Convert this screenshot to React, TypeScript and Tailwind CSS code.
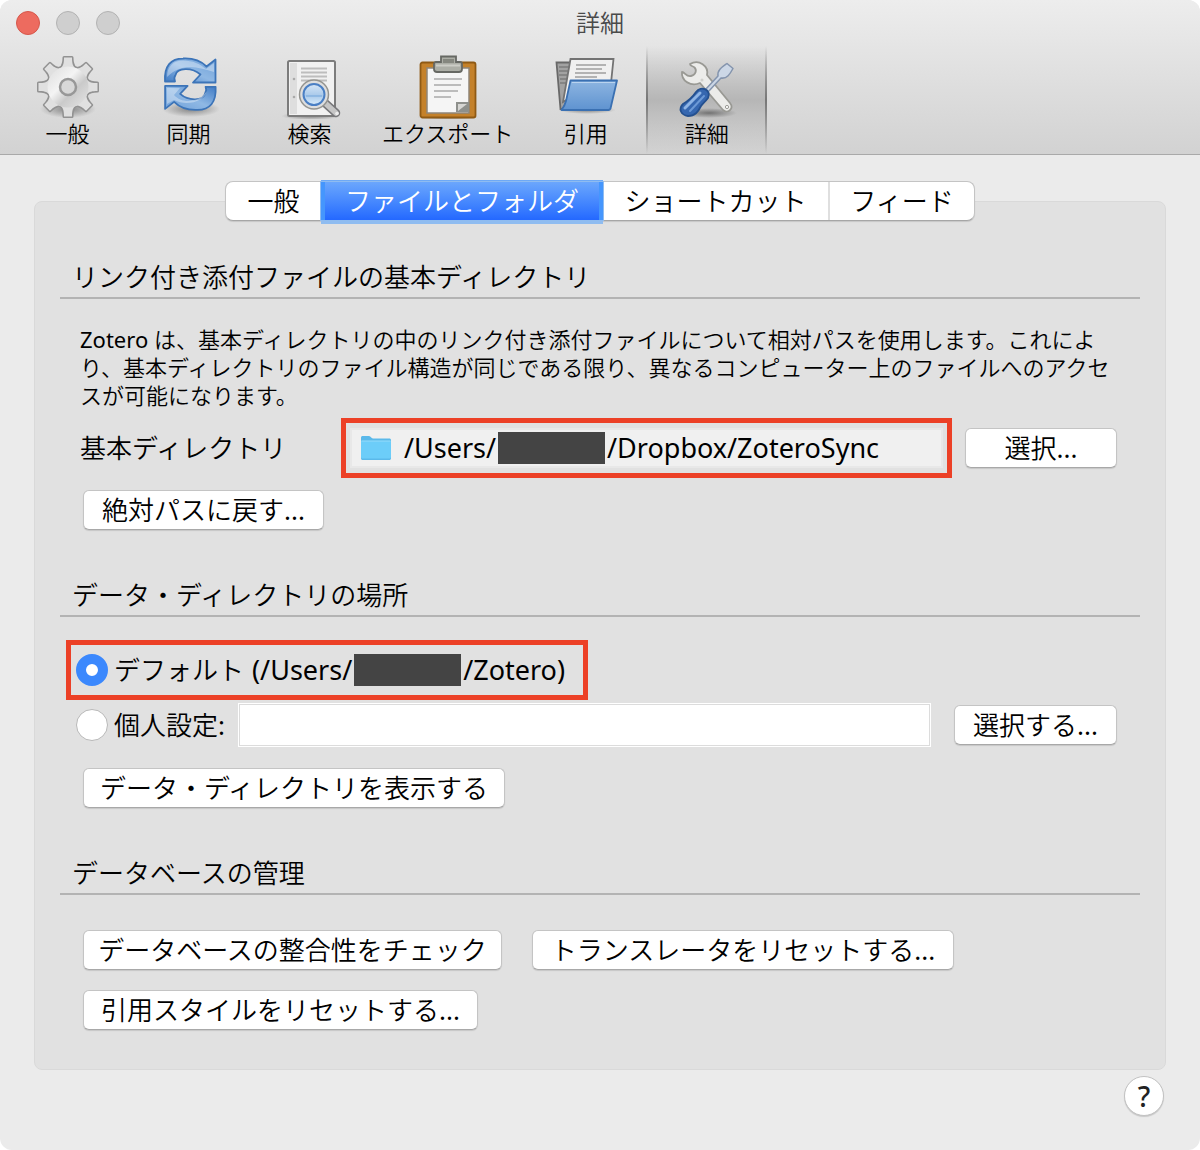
import { clsx } from "clsx";
import type { ComponentPropsWithoutRef, ReactNode } from "react";

/* ---------- Toolbar icons ---------- */

const TEETH = [0, 45, 90, 135, 180, 225, 270, 315];

function GearShape() {
  return (
    <>
      <circle cx="32" cy="32" r="20.5" />
      {TEETH.map((angle) => (
        <path
          key={angle}
          d="M24.5 13.5 C27.5 10.5 28 8 28 2.5 H36 C36 8 36.5 10.5 39.5 13.5 Z"
          transform={`rotate(${angle} 32 32)`}
        />
      ))}
    </>
  );
}

function GearIcon() {
  return (
    <svg aria-hidden="true" className="size-16" viewBox="0 0 64 64">
      <defs>
        <linearGradient id="gearFill" x1="0" x2="1" y1="0" y2="1">
          <stop offset="0" stopColor="#dcdcdc" />
          <stop offset=".4" stopColor="#f4f4f4" />
          <stop offset=".62" stopColor="#cacaca" />
          <stop offset="1" stopColor="#e6e6e6" />
        </linearGradient>
        <radialGradient id="iconShade">
          <stop offset="0" stopColor="#000" stopOpacity=".4" />
          <stop offset="1" stopColor="#000" stopOpacity="0" />
        </radialGradient>
      </defs>
      <ellipse cx="32" cy="54" fill="url(#iconShade)" rx="28" ry="9" />
      <g fill="#929292" stroke="#929292" strokeLinejoin="round" strokeWidth="3">
        <GearShape />
      </g>
      <g fill="#e0e0e0">
        <GearShape />
      </g>
      <circle cx="32" cy="32" fill="url(#gearFill)" r="20.5" />
      <circle cx="32" cy="32" fill="#d8d8d8" r="8" stroke="#989898" strokeWidth="2.5" />
    </svg>
  );
}

function SyncIcon() {
  const arrow =
    "M8 26.5 C7 11 14 3.5 26 3.5 C36 3 44 6 49.5 11.5 L58.5 4.5 V27.5 H36 L43.5 19.5 C35 12 20 12.5 18.5 20 C17 22 17 24 18 26.5 Z";
  const shine = "M10 22 C10 11 17 5.5 26 5.5 C36 5.5 43 9 49 14 L57 8 V17 C42 13 26 6 10 22 Z";

  return (
    <svg aria-hidden="true" className="size-16" viewBox="0 0 64 64">
      <defs>
        <linearGradient id="syncTop" x1="0" x2="1" y1="1" y2="0">
          <stop offset="0" stopColor="#3d79c4" />
          <stop offset=".5" stopColor="#8fb8e4" />
          <stop offset="1" stopColor="#6d9fd8" />
        </linearGradient>
      </defs>
      <ellipse cx="34" cy="54" fill="url(#iconShade)" rx="29" ry="8" />
      <g fill="url(#syncTop)" stroke="#3c74b8" strokeLinejoin="round" strokeWidth="1.8">
        <path d={arrow} />
        <path d={arrow} transform="rotate(180 33.3 29.2)" />
      </g>
      <path d={shine} fill="#fff" opacity=".35" />
      <path d="M10 33 L23 33 L17 40 C25 49 42 48 50 36 C48 46 30 52 17 45 L10 49 Z" fill="#fff" opacity=".35" />
    </svg>
  );
}

function SearchIcon() {
  return (
    <svg aria-hidden="true" className="size-16" viewBox="0 0 64 64">
      <defs>
        <linearGradient id="lensFill" x1="0" x2="0" y1="0" y2="1">
          <stop offset="0" stopColor="#d6e6f6" />
          <stop offset=".55" stopColor="#a9c9ea" />
          <stop offset="1" stopColor="#d9ecfb" />
        </linearGradient>
      </defs>
      <ellipse cx="33" cy="61" fill="url(#iconShade)" rx="30" ry="4" />
      <rect fill="#f1f1f1" height="55" rx="1.5" stroke="#7c7c7c" strokeWidth="2" width="47" x="10" y="6" />
      <path d="M12 8 H19 V59 H12 Z" fill="#dedede" />
      <circle cx="16" cy="24" fill="#aaa" r="1.3" />
      <circle cx="16" cy="42" fill="#aaa" r="1.3" />
      <path d="M23 13.5 H49 M23 17.5 H49 M23 21.5 H49 M23 25.5 H49" stroke="#bdbdbd" strokeWidth="1.8" />
      <path d="M47 48 L58 58" stroke="#77777a" strokeLinecap="round" strokeWidth="8.5" />
      <path d="M47 48 L58 58" stroke="#c6c6c6" strokeLinecap="round" strokeWidth="5.5" />
      <circle cx="59" cy="58.5" fill="#eee" r="1.8" />
      <circle cx="36" cy="39.5" fill="#dedede" r="14.5" stroke="#949490" strokeWidth="1.5" />
      <circle cx="36" cy="39.5" fill="url(#lensFill)" r="10.5" stroke="#4a7fc4" strokeWidth="2" />
      <path d="M28 41 H44" stroke="#7fadde" strokeWidth="1.2" />
    </svg>
  );
}

function ClipboardIcon() {
  return (
    <svg aria-hidden="true" className="size-16" viewBox="0 0 64 64">
      <ellipse cx="32" cy="62" fill="url(#iconShade)" rx="31" ry="3" />
      <rect fill="#c4812a" height="55" rx="2" stroke="#8f5a14" strokeWidth="1.8" width="55" x="4.5" y="7.5" />
      <rect fill="#f5f5f5" height="45" stroke="#8e8578" strokeWidth="1.5" width="42" x="11" y="13" />
      <path d="M40 57 V47 H53 V57 Z" fill="#8e908c" />
      <path d="M42 56 V49 H51 Z" fill="#d6d6d3" />
      <path d="M18 24 H46 M18 30 H45 M18 36 H42 M18 42 H35" stroke="#bcbcbc" strokeWidth="1.8" />
      <path
        d="M25 1.5 H40 V7 H44 C45.5 7 46 8 46 9 V14 C46 16 45 17 43 17 H21 C19 17 18 16 18 14 V9 C18 8 19 7 20 7 H25 Z"
        fill="#acaea6"
        stroke="#666863"
        strokeWidth="1.8"
      />
      <path d="M27 4 H38 V8 H27 Z" fill="#85877f" />
      <path d="M20 10.5 H44" stroke="#cccdc6" strokeWidth="2" />
    </svg>
  );
}

function FolderStackIcon() {
  return (
    <svg aria-hidden="true" className="size-16" viewBox="0 0 64 64">
      <defs>
        <linearGradient id="folderFront" x1="0" x2="0" y1="0" y2="1">
          <stop offset="0" stopColor="#8db5e1" />
          <stop offset="1" stopColor="#5f93d0" />
        </linearGradient>
      </defs>
      <ellipse cx="33" cy="55" fill="url(#iconShade)" rx="29" ry="4" />
      <path d="M2.5 7.5 H16 L20 30 L9 54 H6.5 Z" fill="#a2a2a2" stroke="#686868" strokeWidth="1.8" />
      <path d="M5 12 H15 M5 16 H15 M5 20 H14 M6 24 H14 M6 28 H13" stroke="#7c7c7c" strokeWidth="1.5" />
      <path d="M16.5 4 H59.5 L57 28 L14 44 L9 47 Z" fill="#f0f0f0" stroke="#737373" strokeWidth="1.8" />
      <path d="M22 10 H52 M22 14 H48 M21 18 H52 M21 22 H43" stroke="#b3b3b3" strokeWidth="1.8" />
      <path
        d="M16.5 25.5 H63 L56.5 53.5 C56 54.5 55.5 55 54.5 55 H7.5 C10 52 11 50 12 46 Z"
        fill="url(#folderFront)"
        stroke="#3a70b2"
        strokeLinejoin="round"
        strokeWidth="1.8"
      />
      <path d="M18 27.5 H61" stroke="#b9d3ef" strokeWidth="1.2" />
    </svg>
  );
}

function ToolsIcon() {
  return (
    <svg aria-hidden="true" className="size-16" viewBox="0 0 64 64">
      <ellipse cx="34" cy="58" fill="url(#iconShade)" rx="28" ry="5" />
      <path
        d="M15 9 C24 4 34 11 32 20 L55 48 C60 54 52 59 48 55 L25 28 C16 32 6 26 7 17 C10 17 11 22 16 21 C21 20 22 15 19.5 12.5 C18 11 15 11 15 9 Z"
        fill="#ececea"
        stroke="#999994"
        strokeLinejoin="round"
        strokeWidth="1.8"
      />
      <circle cx="52" cy="52" fill="#fff" r="1.6" stroke="#999994" />
      <circle cx="27" cy="25" fill="#d0d0cc" r="1.5" />
      <path
        d="M30 35 L43 21 C42 15 47 12 52 8.5 L58 13.5 C55 19 52 24 46 23 L33 37 Z"
        fill="#ccd7e6"
        stroke="#8494ad"
        strokeLinejoin="round"
        strokeWidth="1.5"
      />
      <path
        d="M21 37 C26 30 37 35 33 43 C30 47 28 48 26 51 C23 57 20 61 13 61 C6 60 3 54 8 49 C13 46 17 43 21 37 Z"
        fill="#3667b0"
        stroke="#24508f"
        strokeWidth="1.8"
      />
      <path d="M25 38 L10 53" stroke="#8fb5e6" strokeLinecap="round" strokeWidth="3" />
      <path d="M29 41 L15 56" stroke="#6c99d6" strokeLinecap="round" strokeWidth="2" />
    </svg>
  );
}

function FolderIcon() {
  return (
    <svg aria-hidden="true" className="h-[26px] w-8 shrink-0" viewBox="0 0 32 26">
      <path
        d="M1 3 C1 1.5 1.5 1 3 1 H9 C11 1 11 3.5 13 3.5 H29 C30.5 3.5 31 4 31 5.5 V23 C31 24.5 30.5 25 29 25 H3 C1.5 25 1 24.5 1 23 Z"
        fill="#5bb9ea"
      />
      <path d="M1 6 H31 V22 C31 23 30 23.5 29 23.5 H3 C2 23.5 1 23 1 22 Z" fill="#6ccdf9" />
      <path d="M1.5 6 H30.5" stroke="#95dcfb" />
    </svg>
  );
}

/* ---------- Building blocks ---------- */

const TOOLBAR = [
  { label: "一般", icon: <GearIcon /> },
  { label: "同期", icon: <SyncIcon /> },
  { label: "検索", icon: <SearchIcon /> },
  { label: "エクスポート", icon: <ClipboardIcon /> },
  { label: "引用", icon: <FolderStackIcon /> },
  { label: "詳細", icon: <ToolsIcon />, active: true },
];

const TABS = [
  { label: "一般", width: "w-[95px]" },
  { label: "ファイルとフォルダ", width: "w-[282px]", active: true },
  { label: "ショートカット", width: "w-[225px]" },
  { label: "フィード", width: "w-[146px]" },
];

function PushButton({ className, ...props }: ComponentPropsWithoutRef<"button">) {
  return (
    <button
      className={clsx(
        "h-10 shrink-0 rounded-md border border-[#c4c4c4] border-b-[#a8a8a8] bg-white leading-9 whitespace-nowrap shadow-[0_1px_1px_rgba(0,0,0,0.12)]",
        className,
      )}
      type="button"
      {...props}
    />
  );
}

function Section({ title, children }: { title: string; children: ReactNode }) {
  return (
    <section>
      <h2 className="border-b-2 border-[#b3b3b3] pl-3 leading-10">{title}</h2>
      {children}
    </section>
  );
}

function Redacted() {
  return <span className="mx-0.5 inline-block h-8 w-[107px] shrink-0 bg-[#444444]" />;
}

function Highlight({ className, children }: { className?: string; children: ReactNode }) {
  return (
    <div className={clsx("flex h-[60px] items-center border-5 border-[#ec4026]", className)}>
      {children}
    </div>
  );
}

const radioClass =
  "size-8 shrink-0 appearance-none rounded-full border border-[#b8b8b8] bg-white checked:border-10 checked:border-[#3b88fd]";

/* ---------- Window ---------- */

function WindowHeader() {
  return (
    <header className="border-b border-[#a9a9a9] bg-linear-to-b from-[#ededed] to-[#d2d2d2]">
      <div className="grid h-[46px] grid-cols-3 items-center">
        <div className="flex gap-4 pl-4">
          <button
            aria-label="閉じる"
            className="size-6 rounded-full border border-[#d5574b] bg-[#ed6b5f]"
            type="button"
          />
          <button
            aria-label="しまう"
            className="size-6 rounded-full border border-[#b2b2b2] bg-[#cfcfcf]"
            type="button"
          />
          <button
            aria-label="拡大"
            className="size-6 rounded-full border border-[#b2b2b2] bg-[#cfcfcf]"
            type="button"
          />
        </div>
        <h1 className="text-center text-2xl text-[#4a4a4a]">詳細</h1>
      </div>
      <nav className="flex pl-[7px]">
        {TOOLBAR.map(({ label, icon, active }) => (
          <button
            key={label}
            aria-pressed={!!active}
            className={clsx(
              "relative flex h-[108px] min-w-[121px] flex-col items-center px-3 pt-[9px] text-[22px] leading-7",
              active && "bg-linear-to-b from-transparent via-[#b6b6b6] to-transparent",
            )}
            type="button"
          >
            {active && (
              <>
                <span className="absolute inset-y-0 left-0 w-0.5 bg-linear-to-b from-transparent via-[#777777] to-transparent" />
                <span className="absolute inset-y-0 right-0 w-0.5 bg-linear-to-b from-transparent via-[#777777] to-transparent" />
              </>
            )}
            {icon}
            {label}
          </button>
        ))}
      </nav>
    </header>
  );
}

function TabBar() {
  return (
    <div
      className="relative z-10 flex h-10 rounded-lg border border-[#c4c4c4] border-b-[#a6a6a6] bg-white shadow-[0_1px_1px_rgba(0,0,0,0.12)]"
      role="tablist"
    >
      {TABS.map(({ label, width, active }, i) => (
        <button
          key={label}
          aria-selected={!!active}
          className={clsx(
            "leading-9 whitespace-nowrap",
            width,
            active &&
              "border-x-4 border-[#4596fd] bg-linear-to-b from-[#6ba6fc] to-[#2468ff] text-white shadow-[0_0_0_1px_#8fbcf0,0_-2px_0_#6ea9f5,0_4px_0_#8fbcf0]",
            i === 3 && "border-l-2 border-[#dfdfdf]",
          )}
          role="tab"
          type="button"
        >
          {label}
        </button>
      ))}
    </div>
  );
}

export default function App() {
  return (
    <div className="bg-white">
      <div className="flex min-h-screen flex-col overflow-hidden rounded-xl bg-[#ebebeb] font-['Noto_Sans','Noto_Sans_CJK_JP_DemiLight','Noto_Sans_CJK_JP',sans-serif] text-[26px] text-black">
        <WindowHeader />

        <main className="flex flex-col items-center px-[34px] pt-[26px]">
          <TabBar />

          <div className="-mt-5 w-full rounded-lg border border-[#d9d9d9] bg-[#e1e1e1] px-[25px] pt-[55px] pb-[39px]">
            <div className="flex flex-col gap-[45px]">
              <Section title="リンク付き添付ファイルの基本ディレクトリ">
                <p className="mt-[26px] pr-6 pl-5 text-[22px] leading-7">
                  Zotero
                  は、基本ディレクトリの中のリンク付き添付ファイルについて相対パスを使用します。これにより、基本ディレクトリのファイル構造が同じである限り、異なるコンピューター上のファイルへのアクセスが可能になります。
                </p>
                <div className="mt-[9px] flex items-center pr-[23px] pl-5">
                  <label className="w-[261px] shrink-0" htmlFor="base-directory">
                    基本ディレクトリ
                  </label>
                  <Highlight className="mr-[13px] flex-1 px-1">
                    <output
                      className="flex h-10 w-full items-center border-2 border-[#e8e8e8] bg-[#f0f0f0] pl-2 text-[27px]"
                      id="base-directory"
                    >
                      <FolderIcon />
                      <span className="ml-3">/Users/</span>
                      <Redacted />
                      <span>/Dropbox/ZoteroSync</span>
                    </output>
                  </Highlight>
                  <PushButton className="w-[152px]">選択...</PushButton>
                </div>
                <PushButton className="mt-3 ml-[23px] w-[241px]">絶対パスに戻す...</PushButton>
              </Section>

              <Section title="データ・ディレクトリの場所">
                <Highlight className="mt-[23px] ml-[6px] w-[522px] pl-[5px]">
                  <input
                    defaultChecked
                    className={radioClass}
                    id="location-default"
                    name="location"
                    type="radio"
                  />
                  <label className="ml-[6px] flex items-center" htmlFor="location-default">
                    デフォルト
                    <span className="ml-2 text-[27px]">(/Users/</span>
                    <Redacted />
                    <span className="text-[27px]">/Zotero)</span>
                  </label>
                </Highlight>
                <div className="mt-[3px] flex items-center pr-[23px] pl-4">
                  <input className={radioClass} id="location-custom" name="location" type="radio" />
                  <label className="ml-[6px] w-[124px] shrink-0" htmlFor="location-custom">
                    個人設定:
                  </label>
                  <input
                    aria-label="個人設定のディレクトリ"
                    className="mr-[23px] h-11 min-w-0 flex-1 border border-white bg-white px-2 inset-ring inset-ring-[#dcdcdc]"
                    type="text"
                  />
                  <PushButton className="w-[163px]">選択する...</PushButton>
                </div>
                <PushButton className="mt-[21px] ml-[23px] w-[422px]">
                  データ・ディレクトリを表示する
                </PushButton>
              </Section>

              <Section title="データベースの管理">
                <div className="mt-[35px] flex flex-wrap gap-x-[30px] gap-y-5 pl-[23px]">
                  <PushButton className="w-[419px]">データベースの整合性をチェック</PushButton>
                  <PushButton className="w-[422px]">トランスレータをリセットする...</PushButton>
                  <PushButton className="w-[395px]">引用スタイルをリセットする...</PushButton>
                </div>
              </Section>
            </div>
          </div>

          <button
            aria-label="ヘルプ"
            className="mt-[6px] mr-[2px] size-10 self-end rounded-full border border-[#c2c2c2] bg-white text-[28px] leading-9 font-medium text-[#222222] shadow-[0_1px_1px_rgba(0,0,0,0.15)]"
            type="button"
          >
            ?
          </button>
        </main>
      </div>
    </div>
  );
}
